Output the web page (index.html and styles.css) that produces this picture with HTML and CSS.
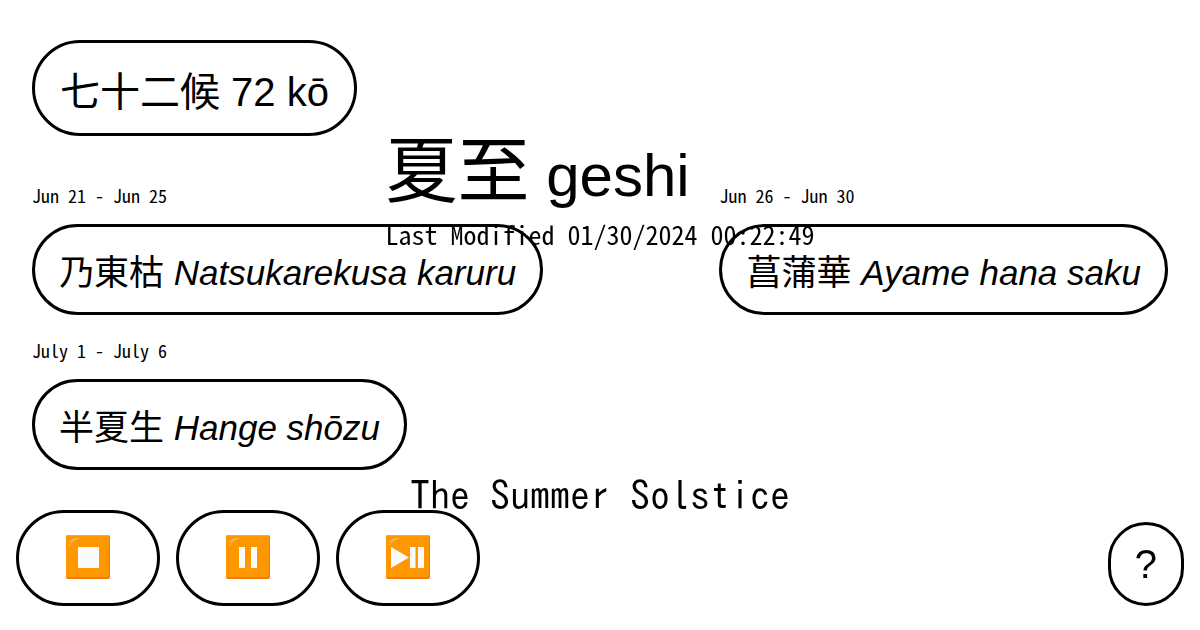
FILE: index.html
```html
<!DOCTYPE html>
<html lang="ja">
<head>
<meta charset="utf-8">
<meta name="viewport" content="width=device-width, initial-scale=1">
<title>七十二候 72 kō</title>
<link rel="stylesheet" href="styles.css">
</head>
<body>
<svg class="defs" aria-hidden="true">
  <defs>
    <g id="tile">
      <rect width="44" height="44" rx="2" fill="#f57c00"/>
      <rect width="43" height="42" rx="2" fill="#ff9800"/>
      <path d="M2 0h40l2 1H1z" fill="#ffa726"/>
      <path d="M3 10C3 5 6 3 12 3q2 0 1 1Q6 5 4 11q-1 1-1-1z" fill="#ffb33c"/>
    </g>
  </defs>
</svg>

<header class="top">
  <a class="pill pill-title" href="#">七十二候 72 kō</a>
</header>

<main class="seasons">
  <section class="season">
    <p class="dates">Jun 21 - Jun 25</p>
    <a class="pill" href="#">乃東枯 <i>Natsukarekusa karuru</i></a>
  </section>
  <section class="season">
    <p class="dates">Jun 26 - Jun 30</p>
    <a class="pill" href="#">菖蒲華 <i>Ayame hana saku</i></a>
  </section>
  <section class="season">
    <p class="dates">July 1 - July 6</p>
    <a class="pill" href="#">半夏生 <i>Hange shōzu</i></a>
  </section>
</main>

<div class="overlay">
  <div class="heading">
    <h1>夏至<span class="reading"> geshi</span></h1>
    <p class="modified">Last Modified 01/30/2024 00:22:49</p>
  </div>
  <p class="caption">The Summer Solstice</p>
</div>

<footer class="controls">
  <button class="pill control" type="button" aria-label="Stop">
    <svg viewBox="0 0 44 44"><use href="#tile"/><path d="M12 12h21v21H12z" fill="#fafafa"/></svg>
  </button>
  <button class="pill control" type="button" aria-label="Pause">
    <svg viewBox="0 0 44 44"><use href="#tile"/><path d="M13 12h6v21h-6zM25 12h6v21h-6z" fill="#fafafa"/></svg>
  </button>
  <button class="pill control" type="button" aria-label="Play or pause">
    <svg viewBox="0 0 44 44"><use href="#tile"/><path d="M5 12l18 10.500L5 33zM24 12h5.500v21H24zM32 12h6v21h-6z" fill="#fafafa"/></svg>
  </button>
  <button class="pill help" type="button">?</button>
</footer>
</body>
</html>
```
FILE: styles.css
```css
* {
  box-sizing: border-box;
}

body {
  margin: 0;
  min-height: 100vh;
  padding-top: 40px;
  background: #fff;
  color: #000;
  font-family: "Liberation Sans", "Noto Sans CJK JP", sans-serif;
}

h1,
p {
  margin: 0;
  font-weight: 400;
}

.defs {
  position: absolute;
  width: 0;
  height: 0;
}

.pill {
  display: block;
  width: fit-content;
  padding: 19px 24px 13px;
  border: 3px solid #000;
  border-radius: 48px;
  background: none;
  color: inherit;
  font-family: inherit;
  font-size: 35px;
  line-height: 53px;
  text-decoration: none;
}

.pill-title {
  padding: 20px 25px 12px;
  font-size: 40px;
  line-height: 58px;
}

.top {
  padding: 0 32px;
}

.seasons {
  display: flex;
  flex-wrap: wrap;
  justify-content: space-between;
  gap: 23px 32px;
  margin-top: 47px;
  padding: 0 32px;
}

.dates,
.modified {
  font-family: "Noto Sans Mono CJK JP", "Noto Sans CJK JP", monospace;
}

.dates {
  margin-bottom: 16px;
  font-size: 18px;
  line-height: 25px;
}

.overlay {
  position: fixed;
  inset: 0;
  display: flex;
  flex-direction: column;
  justify-content: space-between;
  align-items: center;
  padding: 128px 32px 106px;
  pointer-events: none;
}

h1 {
  font-family: "Liberation Sans Narrow", "Liberation Sans", "Noto Sans CJK JP", sans-serif;
  font-size: 72px;
  line-height: 86px;
}

.reading {
  font-size: 60px;
}

.modified {
  font-size: 26px;
  line-height: 30px;
}

.caption {
  font-family: "IPAGothic", "Noto Sans Mono CJK JP", "Noto Sans CJK JP", monospace;
  font-size: 40px;
  line-height: 58px;
}

.controls {
  position: fixed;
  right: 16px;
  bottom: 24px;
  left: 16px;
  display: flex;
  align-items: flex-end;
  gap: 16px;
}

.control {
  display: grid;
  place-items: center;
  width: 144px;
  height: 96px;
  padding: 15px 25px 17px;
}

.control svg {
  width: 44px;
  height: 44px;
}

.help {
  margin-left: auto;
  padding: 16px 24px;
  font-size: 40px;
  line-height: 46px;
}
```
